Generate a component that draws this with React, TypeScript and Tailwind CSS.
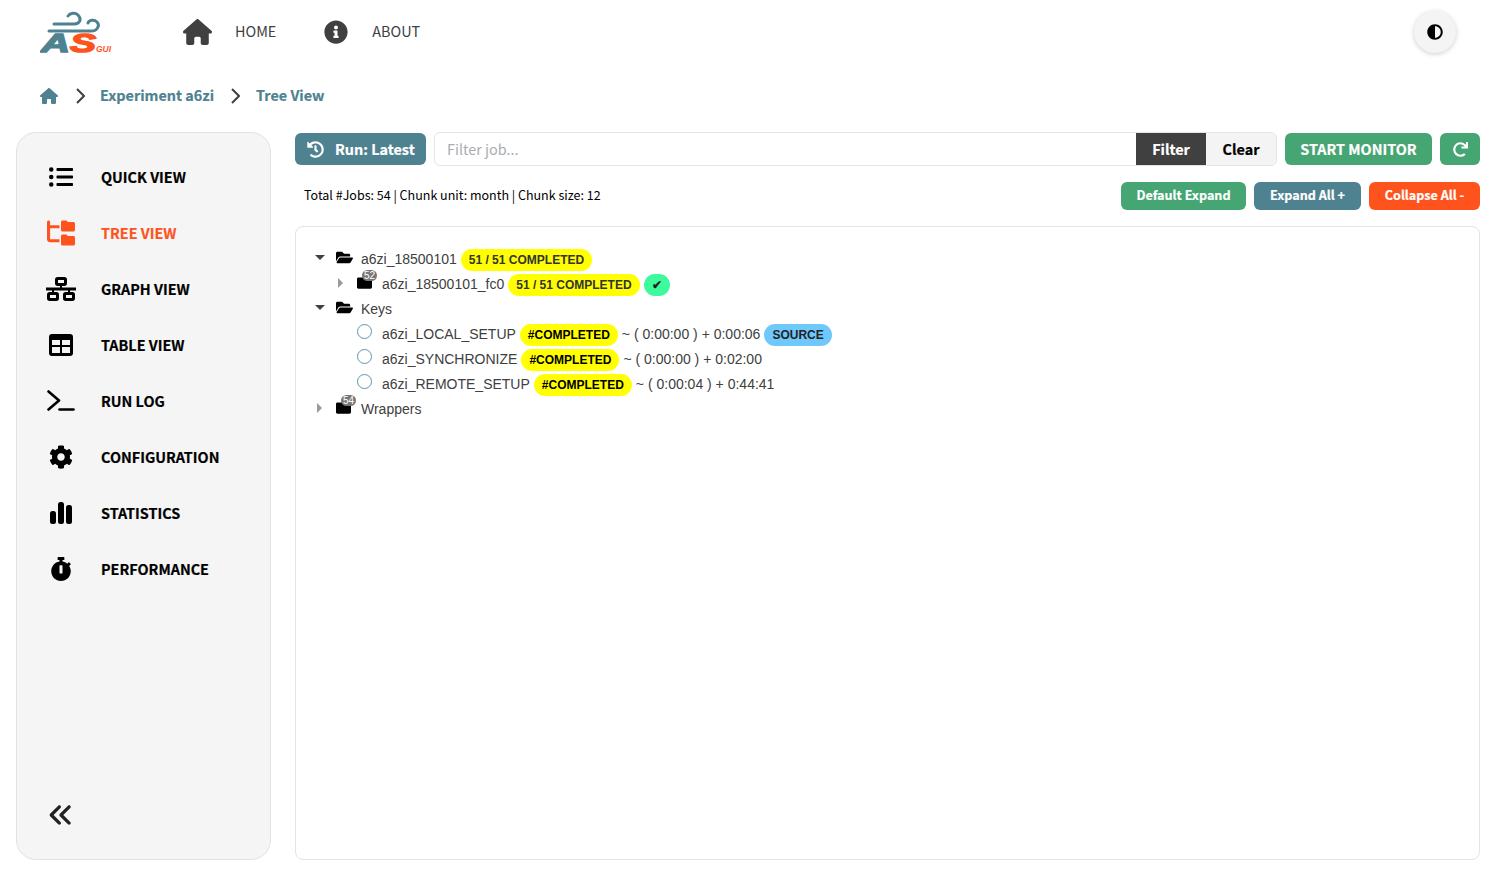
import type { ReactNode } from "react";
import {
  FaAdjust,
  FaCog,
  FaFolder,
  FaFolderOpen,
  FaHistory,
  FaInfoCircle,
  FaListUl,
  FaRedo,
  FaStopwatch,
} from "react-icons/fa";
import { FaAnglesLeft, FaFolderTree, FaHouse } from "react-icons/fa6";

// the bold labels sit a touch heavier in the reference
const heavy = "font-bold [-webkit-text-stroke:0.2px]";

function GraphIcon() {
  return (
    <svg width="30" height="24" viewBox="0 0 30 24" fill="none" stroke="currentColor" strokeWidth="3">
      <rect x="10.5" y="1.5" width="9" height="6" rx="1.2" />
      <path d="M0 12 H30" />
      <path d="M15 7 V12 M7 12 V16 M23 12 V16" strokeWidth="2" />
      <rect x="2.5" y="16.5" width="9" height="6" rx="1.2" />
      <rect x="18.5" y="16.5" width="9" height="6" rx="1.2" />
    </svg>
  );
}

function TableIcon() {
  return (
    <svg width="24" height="22" viewBox="0 0 24 22">
      <path
        fill="currentColor"
        fillRule="evenodd"
        d="M3 0 H21 A3 3 0 0 1 24 3 V19 A3 3 0 0 1 21 22 H3 A3 3 0 0 1 0 19 V3 A3 3 0 0 1 3 0 Z M3 6 V11 H11 V6 Z M13 6 V11 H21 V6 Z M3 13 V19 H11 V13 Z M13 13 V19 H21 V13 Z"
      />
    </svg>
  );
}

function PromptIcon() {
  return (
    <svg width="28" height="22" viewBox="0 0 28 22" fill="none" stroke="currentColor" strokeWidth="2.6" strokeLinecap="round" strokeLinejoin="round">
      <path d="M1.5 1.5 L12 10.5 L1.5 19.5" />
      <path d="M12.5 19.5 H26.5" />
    </svg>
  );
}

function BarsIcon() {
  return (
    <svg width="22" height="22" viewBox="0 0 22 22" fill="currentColor">
      <rect x="0" y="9" width="6" height="13" rx="2.5" />
      <rect x="8" y="0" width="6" height="22" rx="2.5" />
      <rect x="16" y="3" width="6" height="19" rx="2.5" />
    </svg>
  );
}

function CrumbChevron({ className }: { className: string }) {
  return (
    <svg width="9" height="16" viewBox="0 0 9 16" fill="none" stroke="#404040" strokeWidth="2" className={className}>
      <path d="M1 1 L8 8 L1 15" />
    </svg>
  );
}

const sideItems = [
  { label: "QUICK VIEW", icon: <FaListUl className="w-[24px] h-[24px]" /> },
  { label: "TREE VIEW", icon: <FaFolderTree className="w-[28px] h-[26px]" />, active: true },
  { label: "GRAPH VIEW", icon: <GraphIcon /> },
  { label: "TABLE VIEW", icon: <TableIcon /> },
  { label: "RUN LOG", icon: <PromptIcon /> },
  { label: "CONFIGURATION", icon: <FaCog className="w-[24px] h-[24px]" /> },
  { label: "STATISTICS", icon: <BarsIcon /> },
  { label: "PERFORMANCE", icon: <FaStopwatch className="w-[24px] h-[24px]" /> },
];

function Logo() {
  return (
    <svg width="74" height="48" viewBox="0 0 74 48" className="shrink-0">
      <g fill="none" stroke="#4f8291" strokeWidth="3" strokeLinecap="round">
        <path d="M14 16 H34 C40 16 42 11 38 7 C35 4 30 5 28 8" />
        <path d="M9 23 H51 C58 23 60 17 57 14 C54 11 49 12 48 15" />
      </g>
      <text x="1" y="44" fontFamily="Liberation Sans" fontWeight="700" fontStyle="italic" fontSize="25" fill="#4f8291" stroke="#4f8291" strokeWidth="1.4" textLength="29" lengthAdjust="spacingAndGlyphs">A</text>
      <text x="30" y="44" fontFamily="Liberation Sans" fontWeight="700" fontStyle="italic" fontSize="25" fill="#ff531e" stroke="#ff531e" strokeWidth="1.4" textLength="26" lengthAdjust="spacingAndGlyphs">S</text>
      <text x="56" y="44" fontFamily="Liberation Sans" fontWeight="700" fontStyle="italic" fontSize="8.5" fill="#ff531e">GUI</text>
    </svg>
  );
}

function Pill({ children, className }: { children: ReactNode; className: string }) {
  return (
    <span className={"inline-flex items-center h-[22px] px-2 rounded-full text-[12px] font-bold leading-none " + className}>
      {children}
    </span>
  );
}

function Row({ indent, children }: { indent: string; children: ReactNode }) {
  return <div className={"flex items-center h-[25px] " + indent}>{children}</div>;
}

function Arrow({ open }: { open: boolean }) {
  return (
    <span className="w-[11px] flex justify-center -mt-[4px] shrink-0">
      {open ? (
        <span className="w-0 h-0 border-x-[5px] border-x-transparent border-t-[5px] border-t-[#404040]" />
      ) : (
        <span className="w-0 h-0 border-y-[5px] border-y-transparent border-l-[5px] border-l-[#9a9a9a]" />
      )}
    </span>
  );
}

function Folder({ open, count }: { open?: boolean; count?: string }) {
  return (
    <span className="relative w-[17px] ml-[11px] mr-[8px] -mt-[4px] shrink-0 text-black">
      {open ? <FaFolderOpen className="w-[17px] h-[17px]" /> : <FaFolder className="w-[15px] h-[16px]" />}
      {count && (
        <span className="absolute -top-[5px] left-[5px] w-[15px] h-[11px] rounded-full bg-[#777] text-white text-[10px] leading-[11px] text-center">
          {count}
        </span>
      )}
    </span>
  );
}

function JobRow({ name, tail, source }: { name: string; tail: string; source?: boolean }) {
  return (
    <Row indent="pl-[61px]">
      <span className="w-[15px] h-[15px] mr-[10px] -mt-[6px] rounded-full border-[1.5px] border-[#5b97ad] shrink-0" />
      <span>{name}</span>
      <Pill className="ml-1 bg-[#ffff00] text-black">#COMPLETED</Pill>
      <span className="ml-1">{tail}</span>
      {source && <Pill className="ml-1 bg-[#6fc8fb] text-[#222]">SOURCE</Pill>}
    </Row>
  );
}

export default function App() {
  return (
    <div className="h-[887px] bg-white flex flex-col font-['Noto_Sans_CJK_SC','Noto_Sans',sans-serif] overflow-hidden">
      <header className="h-[64px] flex items-center px-[40px] shrink-0">
        <Logo />
        <nav className="flex items-center ml-[69px] text-[#404040] text-[14.4px]">
          <FaHouse className="w-[29px] h-[26px]" />
          <span className="ml-[23px] -mt-[2px]">HOME</span>
          <FaInfoCircle className="w-[24px] h-[24px] ml-[48px]" />
          <span className="ml-[24px] -mt-[2px]">ABOUT</span>
        </nav>
        <button className="ml-auto w-[42px] h-[42px] rounded-full bg-[#f4f4f4] shadow-[0_1px_5px_rgba(0,0,0,0.2)] flex items-center justify-center">
          <FaAdjust className="w-[16px] h-[16px] text-black" />
        </button>
      </header>

      <div className={"h-[68px] flex items-center pl-[40px] pb-[4px] text-[#4f8291] text-[14.4px] shrink-0 " + heavy}>
        <FaHouse className="w-[18px] h-[16px]" />
        <CrumbChevron className="ml-[18px]" />
        <span className="ml-[15px] -mt-[2px]">Experiment a6zi</span>
        <CrumbChevron className="ml-[17px]" />
        <span className="ml-[16px] -mt-[2px]">Tree View</span>
      </div>

      <div className="flex gap-[24px] px-[16px] h-[728px] shrink-0">
        <aside className="w-[255px] shrink-0 bg-[#f5f5f5] border border-[#e2e2e2] rounded-[20px] flex flex-col justify-between pt-[16px] pb-[16px]">
          <ul>
            {sideItems.map((item) => (
              <li
                key={item.label}
                className={"h-[56px] flex items-center text-[14.4px] " + heavy + " " + (item.active ? "text-[#ff531e]" : "text-black")}
              >
                <span className="w-[84px] flex justify-center shrink-0 pl-[4px]">{item.icon}</span>
                <span className="-mt-[1px]">{item.label}</span>
              </li>
            ))}
          </ul>
          <div className="w-[88px] h-[56px] flex items-center justify-center">
            <FaAnglesLeft className="w-[26px] h-[26px] text-[#222]" />
          </div>
        </aside>

        <main className="flex-1 min-w-0 flex flex-col">
          <div className="flex items-center h-[34px] gap-[8px]">
            <button className={"w-[131px] h-[32px] rounded-[6px] bg-[#4f8291] text-white text-[14.4px] flex items-center pl-[12px] " + heavy}>
              <FaHistory className="w-[17px] h-[17px]" />
              <span className="ml-[11px] -mt-[1px]">Run: Latest</span>
            </button>
            <div className="flex flex-1 h-[34px] border border-[#e4e4e4] rounded-[6px] overflow-hidden">
              <input
                placeholder="Filter job..."
                className="flex-1 min-w-0 px-[12px] pb-[1px] text-[14.4px] outline-none placeholder:text-[#a9adb3]"
              />
              <button className={"w-[70px] pb-[1px] bg-[#404040] text-white text-[14.4px] " + heavy}>Filter</button>
              <button className={"w-[70px] pb-[1px] bg-[#f4f4f4] text-black text-[14.4px] " + heavy}>Clear</button>
            </div>
            <button className={"w-[147px] h-[32px] pb-[1px] rounded-[6px] bg-[#45a573] text-white text-[14.4px] " + heavy}>START MONITOR</button>
            <button className="w-[40px] h-[32px] rounded-[6px] bg-[#45a573] text-white flex items-center justify-center">
              <FaRedo className="w-[15px] h-[15px]" />
            </button>
          </div>

          <div className="flex items-center h-[28px] mt-[16px] gap-[8px]">
            <span className="ml-[9px] mr-auto -mt-[2px] text-[12.5px] text-black">Total #Jobs: 54 | Chunk unit: month | Chunk size: 12</span>
            <button className={"w-[125px] h-[28px] pb-[2px] rounded-[6px] bg-[#45a573] text-white text-[12.6px] " + heavy}>Default Expand</button>
            <button className={"w-[107px] h-[28px] pb-[2px] rounded-[6px] bg-[#4f8291] text-white text-[12.6px] " + heavy}>Expand All +</button>
            <button className={"w-[111px] h-[28px] pb-[2px] rounded-[6px] bg-[#ff531e] text-white text-[12.6px] " + heavy}>Collapse All -</button>
          </div>

          <section className="mt-[16px] flex-1 border border-[#e4e4e4] rounded-[8px] pt-[20px] font-['Liberation_Sans',Arial,sans-serif] text-[14px] text-[#404040]">
            <Row indent="pl-[18px]">
              <Arrow open />
              <Folder open />
              <span>a6zi_18500101</span>
              <Pill className="ml-1 bg-[#ffff00] text-[#333]">51 / 51 COMPLETED</Pill>
            </Row>
            <Row indent="pl-[39px]">
              <Arrow open={false} />
              <Folder count="52" />
              <span>a6zi_18500101_fc0</span>
              <Pill className="ml-1 bg-[#ffff00] text-[#333]">51 / 51 COMPLETED</Pill>
              <Pill className="ml-1 bg-[#3dfb9c] text-[#222]">✔</Pill>
            </Row>
            <Row indent="pl-[18px]">
              <Arrow open />
              <Folder open />
              <span>Keys</span>
            </Row>
            <JobRow name="a6zi_LOCAL_SETUP" tail="~ ( 0:00:00 ) + 0:00:06" source />
            <JobRow name="a6zi_SYNCHRONIZE" tail="~ ( 0:00:00 ) + 0:02:00" />
            <JobRow name="a6zi_REMOTE_SETUP" tail="~ ( 0:00:04 ) + 0:44:41" />
            <Row indent="pl-[18px]">
              <Arrow open={false} />
              <Folder count="54" />
              <span>Wrappers</span>
            </Row>
          </section>
        </main>
      </div>
    </div>
  );
}
